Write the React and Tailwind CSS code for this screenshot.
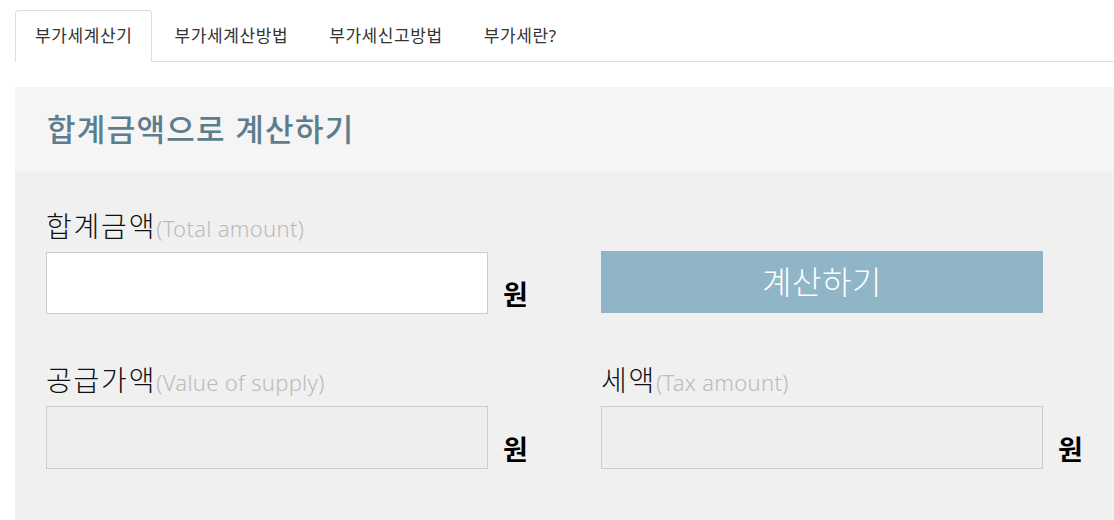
import React from "react";

const tabs = ["부가세계산기", "부가세계산방법", "부가세신고방법", "부가세란?"];

const Won = () => (
  <span className="self-end pb-[6px] text-[27px] font-bold leading-none text-black">원</span>
);

const Label = ({ ko, en }) => (
  <div className="h-[36px] leading-[36px] mb-2 whitespace-nowrap">
    <span className="text-[28px] font-light text-[#111] tracking-[1.8px]">{ko}</span>
    <span className="text-[22px] font-light text-[#bbbbbb] tracking-[0.3px]">({en})</span>
  </div>
);

const App = () => {
  return (
    <div
      className="w-[1114px] h-[520px] bg-white overflow-hidden pt-[10px] pl-[15px]"
      style={{ fontFamily: '"Noto Sans", "Noto Sans CJK KR", sans-serif' }}
    >
      {/* Tabs */}
      <ul className="flex gap-[3px] border-b border-[#dddddd] h-[52px]">
        {tabs.map((t, i) => (
          <li
            key={t}
            className={
              "px-[19px] h-[52px] flex items-center text-[17px] tracking-[0.6px] text-[#333] " +
              (i === 0 ? "bg-white border border-[#dddddd] border-b-white rounded-t-[4px] -mb-px" : "")
            }
          >
            {t}
          </li>
        ))}
      </ul>

      {/* Panel */}
      <div className="mt-[25px]">
        <div className="bg-[#f5f5f5] h-[85px] flex items-center pl-[32px]">
          <h2 className="text-[31px] font-medium text-[#5e7d8c] tracking-[1.3px]">합계금액으로 계산하기</h2>
        </div>

        <div className="bg-[#f0f0f0] h-[400px] pt-[36px] pl-[31px]">
          <div className="grid grid-cols-[555px_520px] gap-y-[48px]">
            <div>
              <Label ko="합계금액" en="Total amount" />
              <div className="flex gap-[15px]">
                <input className="w-[442px] h-[62px] bg-white border border-[#cccccc] outline-none" />
                <Won />
              </div>
            </div>
            <div className="pt-[43px]">
              <button className="w-[442px] h-[62px] bg-[#8fb5c6] text-white text-[32px] font-light tracking-[0.5px]">
                계산하기
              </button>
            </div>

            <div>
              <Label ko="공급가액" en="Value of supply" />
              <div className="flex gap-[15px]">
                <input disabled className="w-[442px] h-[63px] bg-[#eeeeee] border border-[#cccccc]" />
                <Won />
              </div>
            </div>
            <div>
              <Label ko="세액" en="Tax amount" />
              <div className="flex gap-[15px]">
                <input disabled className="w-[442px] h-[63px] bg-[#eeeeee] border border-[#cccccc]" />
                <Won />
              </div>
            </div>
          </div>
        </div>
      </div>
    </div>
  );
};

export default App;
